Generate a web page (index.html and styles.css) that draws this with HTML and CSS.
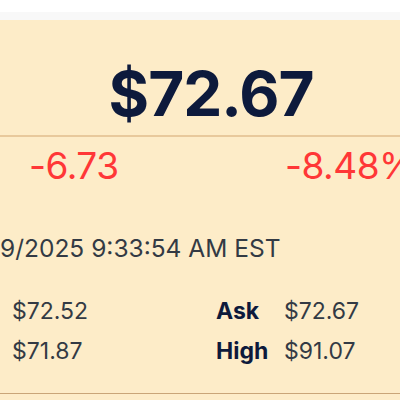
FILE: index.html
```html
<!DOCTYPE html>
<html>
<head>
<meta charset="utf-8">
<link rel="stylesheet" href="styles.css">
</head>
<body>
<div class="topbar"></div>
<div class="band"></div>
<section class="panel">
  <div class="price-row"><span class="price">$72.67</span></div>
  <div class="change-row">
    <span class="change abs">-6.73</span>
    <span class="change pct">-8.48%</span>
  </div>
  <div class="time">9/2025 9:33:54 AM EST</div>
  <div class="stats">
    <span class="val">$72.52</span>
    <span class="label">Ask</span>
    <span class="val">$72.67</span>
    <span class="val">$71.87</span>
    <span class="label">High</span>
    <span class="val">$91.07</span>
  </div>
</section>
</body>
</html>
```
FILE: styles.css
```css
html, body {
  margin: 0;
  padding: 0;
  background: #fdecc8;
  font-family: Inter, "Noto Sans", sans-serif;
}
.topbar {
  height: 12px;
  background: #ffffff;
}
.band {
  height: 8px;
  background: #f8f8f8;
}
.panel {
  background: #fdecc8;
  overflow: hidden;
  border-bottom: 1px solid #c9a578;
  height: 374px;
  box-sizing: border-box;
}
.price-row {
  height: 117px;
  box-sizing: border-box;
  border-bottom: 2px solid #e8c99c;
  display: flex;
  justify-content: center;
  align-items: center;
  padding-left: 22px;
  padding-top: 32px;
}
.price {
  font-size: 62px;
  font-weight: 700;
  color: #0d1a3c;
  letter-spacing: -1px;
}
.change-row {
  display: flex;
  white-space: nowrap;
  padding-top: 7px;
  height: 48px;
}
.change {
  font-size: 37px;
  color: #ff3737;
  font-weight: 400;
  line-height: 44px;
  letter-spacing: -0.5px;
  flex-shrink: 0;
}
.abs {
  margin-left: 29px;
  width: 256px;
}
.time {
  margin-top: 41px;
  font-size: 24.5px;
  color: #333a44;
  line-height: 30px;
  white-space: nowrap;
}
.stats {
  display: grid;
  grid-template-columns: 204px 68px auto;
  row-gap: 12px;
  margin-top: 34px;
  padding-left: 12px;
  font-size: 23px;
  line-height: 28px;
}
.val {
  color: #333a44;
}
.label {
  color: #0d1a3c;
  font-weight: 700;
}
```
